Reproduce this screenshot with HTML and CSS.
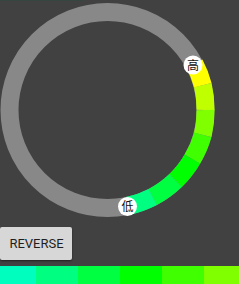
FILE: index.html
```html
<!DOCTYPE html>
<html lang="en">
<head>
    <meta charset="UTF-8">
    <meta name="viewport" content="width=device-width, initial-scale=1.0">
    <title>Color Ring</title>
    <link rel="stylesheet" href="styles.css">
</head>
<body>
<div class="screen">
    <!-- ring -->
    <svg class="ring" width="239" height="224" viewBox="0 0 239 224">
        <rect x="0" y="0" width="83" height="1" fill="#34463f"/>
        <circle cx="107.5" cy="110" r="98" fill="none" stroke="#888888" stroke-width="18"/>
        <g fill="none" stroke-width="18">
            <path d="M194.47 63.76 A98 98 0 0 1 202.82 85.17" stroke="#ffff00"/>
            <path d="M202.82 85.17 A98 98 0 0 1 205.5 110" stroke="#bfff00"/>
            <path d="M205.5 110 A98 98 0 0 1 202.82 134.83" stroke="#80ff00"/>
            <path d="M202.82 134.83 A98 98 0 0 1 192.37 159" stroke="#40ff00"/>
            <path d="M192.37 159 A98 98 0 0 1 175.58 180.5" stroke="#00ff00"/>
            <path d="M175.58 180.5 A98 98 0 0 1 152.75 196.9" stroke="#00ff40"/>
            <path d="M152.75 196.9 A98 98 0 0 1 127.88 205.86" stroke="#00ff80"/>
        </g>
        <!-- thumbs -->
        <circle cx="193" cy="65" r="9.5" fill="#ffffff"/>
        <text class="thumb" x="193" y="69.5" text-anchor="middle">高</text>
        <circle cx="127.5" cy="206.5" r="9.5" fill="#ffffff"/>
        <text class="thumb" x="127.5" y="211" text-anchor="middle">低</text>
    </svg>

    <button type="button" class="reverse">REVERSE</button>

    <!-- colour list -->
    <div class="strip">
        <div class="cell" style="background:#00ffbf"></div>
        <div class="cell" style="background:#00ff80"></div>
        <div class="cell" style="background:#00ff40"></div>
        <div class="cell" style="background:#00ff00"></div>
        <div class="cell" style="background:#40ff00"></div>
        <div class="cell" style="background:#80ff00"></div>
    </div>
</div>
</body>
</html>
```

FILE: styles.css
```css
* {
  box-sizing: border-box;
}

body {
  margin: 0;
  background-color: #414141;
  font-family: Roboto, "Liberation Sans", sans-serif;
}

.screen {
  width: 239px;
  height: 284px;
  overflow: hidden;
}

.ring {
  display: block;
}

.thumb {
  font-family: "Noto Sans CJK SC", sans-serif;
  font-size: 12px;
  fill: #111111;
}

.reverse {
  display: block;
  width: 72px;
  height: 33px;
  margin-top: 3px;
  padding: 0 0 0 1px;
  border: none;
  border-radius: 2px;
  background-color: #d7d7d7;
  color: #1e1e1e;
  font-family: Roboto, "Liberation Sans", sans-serif;
  font-size: 13px;
  box-shadow: 0 1px 2px rgba(0, 0, 0, 0.5);
}

.strip {
  display: flex;
  margin-top: 6px;
  margin-left: -6px;
  height: 18px;
}

.cell {
  flex: 0 0 42px;
  height: 18px;
}
```
